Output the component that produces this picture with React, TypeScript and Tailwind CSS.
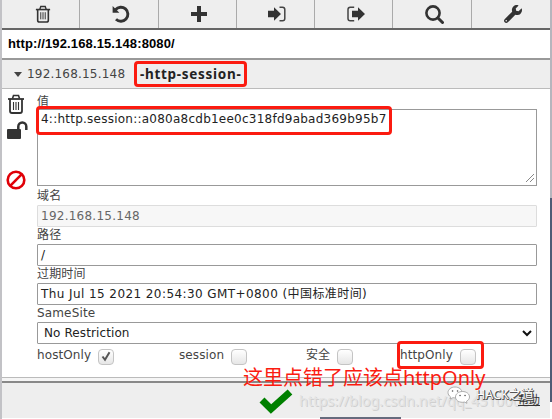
import React from "react";
import { FaWrench } from "react-icons/fa";

type IconProps = { className?: string };

const Trash = ({ className }: IconProps) => (
  <svg viewBox="0 0 18 20" className={className} fill="none" stroke="currentColor">
    <path d="M1 5h16" strokeWidth="1.8" />
    <path d="M5.500 4.500 6.500 1.500h5l1 3" strokeWidth="1.6" />
    <path d="M3 5v12q0 2 2 2h8q2 0 2-2V5" strokeWidth="1.8" />
    <path d="M6.500 8v8M9 8v8M11.500 8v8" strokeWidth="1.1" />
  </svg>
);

const Undo = () => (
  <svg viewBox="0 0 18 18" className="size-[18px]" fill="none">
    <path d="M3.500 4.700A7 7 0 1 1 4 14.200" stroke="#333" strokeWidth="2.900" />
    <path d="M.6 1v6.800h6.800z" fill="#333" />
  </svg>
);

const Plus = () => (
  <svg viewBox="0 0 16 16" className="size-4" stroke="#333" strokeWidth="4">
    <path d="M8 0v16M0 8h16" />
  </svg>
);

const SignIn = () => (
  <svg viewBox="0 0 18 16" className="h-4 w-[18px]" fill="none">
    <path d="M0 4.800h6V1.300L13 8l-7 6.700v-3.500H0z" fill="#333" />
    <path d="M11.500 1.300h3q2.300 0 2.300 2.300v8.800q0 2.300-2.300 2.300h-3" stroke="#444" strokeWidth="1.500" />
  </svg>
);

const SignOut = () => (
  <svg viewBox="0 0 18 16" className="h-4 w-[18px]" fill="none">
    <path d="M5 4.800h6V1.300L18 8l-7 6.700v-3.500H5z" fill="#333" />
    <path d="M7.200 1.300H3.300Q1 1.300 1 3.600v8.800q0 2.300 2.300 2.300h3.900" stroke="#444" strokeWidth="1.500" />
  </svg>
);

const Search = () => (
  <svg viewBox="0 0 19 19" className="size-[19px]" fill="none" stroke="#333">
    <circle cx="8" cy="8" r="6.600" strokeWidth="2.600" />
    <path d="m13 13 4.500 4.500" strokeWidth="3" strokeLinecap="round" />
  </svg>
);

const Unlock = () => (
  <svg viewBox="0 0 21 18" className="h-[18px] w-[21px]" fill="none">
    <rect x="0" y="8" width="14" height="10" rx="1" fill="#333" />
    <path d="M11.300 9V5.400a4 4 0 0 1 8 0V9" stroke="#333" strokeWidth="2.500" />
  </svg>
);

const Ban = () => (
  <svg viewBox="0 0 20 20" className="size-5" fill="none" stroke="#e00008" strokeWidth="2.600">
    <circle cx="10" cy="10" r="8.300" />
    <path d="M4.200 15.800 15.800 4.200" />
  </svg>
);

const tools = [
  <Trash className="h-[18px] w-4 text-[#333]" />,
  <Undo />,
  <Plus />,
  <SignIn />,
  <SignOut />,
  <Search />,
  <FaWrench className="size-[18px] text-[#333]" />,
];

const Label = ({ children }: { children: React.ReactNode }) => (
  <div className="h-[17px] text-[12px] leading-[16px] tracking-[0.15px] text-[#444]">{children}</div>
);

const Check = ({ label, checked, className }: { label: string; checked?: boolean; className: string }) => (
  <div className={`flex items-center ${className}`}>
    <span className="-mt-1 tracking-[0.1px]">{label}</span>
    <span className="ml-[7px] -mt-px flex size-4 shrink-0 items-center justify-center rounded-[4px] border border-[#c4c4c4] bg-linear-to-b from-white to-[#e6e6e6]">
      {checked && (
        <svg viewBox="0 0 10 11" className="h-[11px] w-2.5 overflow-visible" fill="none" stroke="#555" strokeWidth="2">
          <path d="m1.500 5.500 2.500 3.300L8.500 1.300" />
        </svg>
      )}
    </span>
  </div>
);

export default function App() {
  return (
    <div className="relative flex h-[419px] w-[552px] overflow-hidden bg-white font-['DejaVu_Sans','Noto_Sans_CJK_SC',sans-serif] text-[12px]">
      <div className="w-0.5 shrink-0 bg-[#c2c2c6]" />
      <div className="flex w-[548px] shrink-0 flex-col">
        <div className="grid h-[30px] shrink-0 grid-cols-7 border-b-2 border-[#666] bg-[#eee]">
          {tools.map((icon, i) => (
            <div key={i} className="flex items-center justify-center border-r border-[#aaa] pl-1 last:border-r-0">
              {icon}
            </div>
          ))}
        </div>
        <div className="flex h-[30px] shrink-0 items-center border-b-2 border-[#999] pl-1.5 font-['Liberation_Sans',sans-serif] text-[13px] font-bold text-black">
          <span className="tracking-[0.13px]">http://192.168.15.148:8080/</span>
        </div>
        <div className="flex h-[29px] shrink-0 items-center border-b border-[#bbb] bg-[#eee] pl-3 text-[#444]">
          <span className="mr-[5px] border-x-4 border-t-[5px] border-x-transparent border-t-[#444]" />
          <span className="w-[113px] whitespace-nowrap tracking-[0.2px]">192.168.15.148&nbsp;&nbsp;|</span>
          <span className="whitespace-nowrap font-['Noto_Sans',sans-serif] text-[13.5px] font-bold tracking-[0.7px] text-[#222]">-http-session-</span>
        </div>
        <div className="flex h-[288px] shrink-0">
          <div className="flex w-[35px] shrink-0 flex-col pl-[5px] pt-[5px]">
            <Trash className="h-5 w-[18px] text-[#333]" />
            <div className="mt-[7px]"><Unlock /></div>
            <div className="-ml-px mt-[31px]"><Ban /></div>
          </div>
          <div className="flex w-[500px] flex-col pt-1">
            <div className="h-4 text-[12px] leading-[18px] text-[#444]">值</div>
            <div className="relative h-[77px] border border-[#999] pl-[3px] pt-[2px] text-[12px] leading-[15px] text-[#222]">
              <span className="whitespace-nowrap tracking-[0.24px]">4::http.session::a080a8cdb1ee0c318fd9abad369b95b7</span>
              <svg viewBox="0 0 10 10" className="absolute bottom-0.5 right-px size-2.5" stroke="#888"><path d="M1 9 9 1M5 9l4-4" /></svg>
            </div>
            <div className="h-0.5" />
            <Label>域名</Label>
            <div className="h-[22px] rounded-[1px] border border-[#ddd] bg-[#f7f7f7] pl-[3px] leading-[20px] tracking-[0.25px] text-[#666]">192.168.15.148</div>
            <Label>路径</Label>
            <div className="h-[22px] rounded-[1px] border border-[#999] pl-[3px] leading-[20px] text-[#222]">/</div>
            <Label>过期时间</Label>
            <div className="h-[22px] whitespace-nowrap rounded-[1px] border border-[#999] pl-[3px] leading-[20px] tracking-[0.42px] text-[#222]">Thu Jul 15 2021 20:54:30 GMT+0800 (中国标准时间)</div>
            <Label>SameSite</Label>
            <div className="flex h-[22px] items-center justify-between rounded-[1px] border border-[#999] pl-1.5 pr-1 tracking-[0.1px] text-[#222]">
              <span className="-mt-px">No Restriction</span>
              <svg viewBox="0 0 10 7" className="h-[7px] w-2.5" fill="none" stroke="#111" strokeWidth="2"><path d="m1 1 4 4 4-4" /></svg>
            </div>
            <div className="flex h-[31px] pt-px text-[#444]">
              <Check label="hostOnly" checked className="h-[24px] w-[142px]" />
              <Check label="session" className="h-[24px] w-[127px]" />
              <Check label="安全" className="h-[24px] w-[94px]" />
              <Check label="httpOnly" className="h-[24px]" />
            </div>
          </div>
        </div>
        <div className="h-1 shrink-0 border-t border-[#bbb] bg-[#f5f5f5]" />
        <div className="flex h-[37px] shrink-0 border-t-2 border-[#888] bg-[#eee] pl-[257px] pt-[6px]">
          <svg viewBox="0 0 34 26" className="h-[26px] w-[34px]" fill="none" stroke="#008000" strokeWidth="7"><path d="m3 11 9 9L31 3" /></svg>
        </div>
      </div>
      <div className="flex w-0.5 shrink-0 flex-col">
        <div className="h-[198px] bg-[#b5b5bd]" />
        <div className="h-[204px] bg-[#4f5b75]" />
      </div>

      <div className="absolute left-[134px] top-[61px] h-[26px] w-[113px] rounded-[4px] border-3 border-[#fb1b10]" />
      <div className="absolute left-9 top-[106px] h-[29px] w-[356px] rounded-[4px] border-3 border-[#fb1b10]" />
      <div className="absolute left-[397px] top-[341px] h-[28px] w-[87px] rounded-[4px] border-3 border-[#fb1b10]" />
      <div className="absolute left-[320px] top-[417px] h-0.5 w-[81px] bg-[#666b7d]" />
      <div className="absolute left-[299px] top-[390px] whitespace-nowrap font-['Noto_Sans',sans-serif] text-[14.5px] leading-[20px] text-[#e4e4e4] [text-shadow:1px_1px_0_#d0d0d0]">https://blog.csdn.net/qq_45100004</div>
      <div className="absolute left-[518px] top-[393px] text-[11px] leading-[16px] text-[#333] underline">帮助</div>
      <svg viewBox="0 0 24 18" className="absolute left-[447px] top-[386px] h-[18px] w-6" fill="#fff" stroke="#999" strokeWidth=".8">
        <path d="M8 1C4 1 1 3.500 1 6.500c0 2 1 3.300 2.500 4.300L3 13l3-1.300c5 1 9-1.400 9-5.200C15 3.500 12 1 8 1z" />
        <path d="M15.500 5.500c-4 0-7 2.400-7 5.500s3 5.300 7 5.300l2-.2 2.500 1.200-.5-2c2-1.200 3-2.600 3-4.300 0-3.100-3-5.500-7-5.500z" />
        <path d="M5.500 5h.1M10.500 5h.1M13 9.500h.1M18 9.500h.1" stroke="#555" strokeWidth="1.500" strokeLinecap="round" />
      </svg>
      <div className="absolute left-[476px] top-[385px] whitespace-nowrap font-['Noto_Sans','Noto_Sans_CJK_SC',sans-serif] text-[12.5px] leading-[20px] text-white [text-shadow:1px_0_0_#555,0_1px_0_#555,1px_1px_0_#444]">HACK之道</div>
      <div className="absolute left-[243px] top-[365px] whitespace-nowrap font-['Noto_Sans','Noto_Sans_CJK_SC',sans-serif] text-[20px] leading-[26px] text-[#fb1b10]">这里点错了应该点httpOnly</div>
    </div>
  );
}
